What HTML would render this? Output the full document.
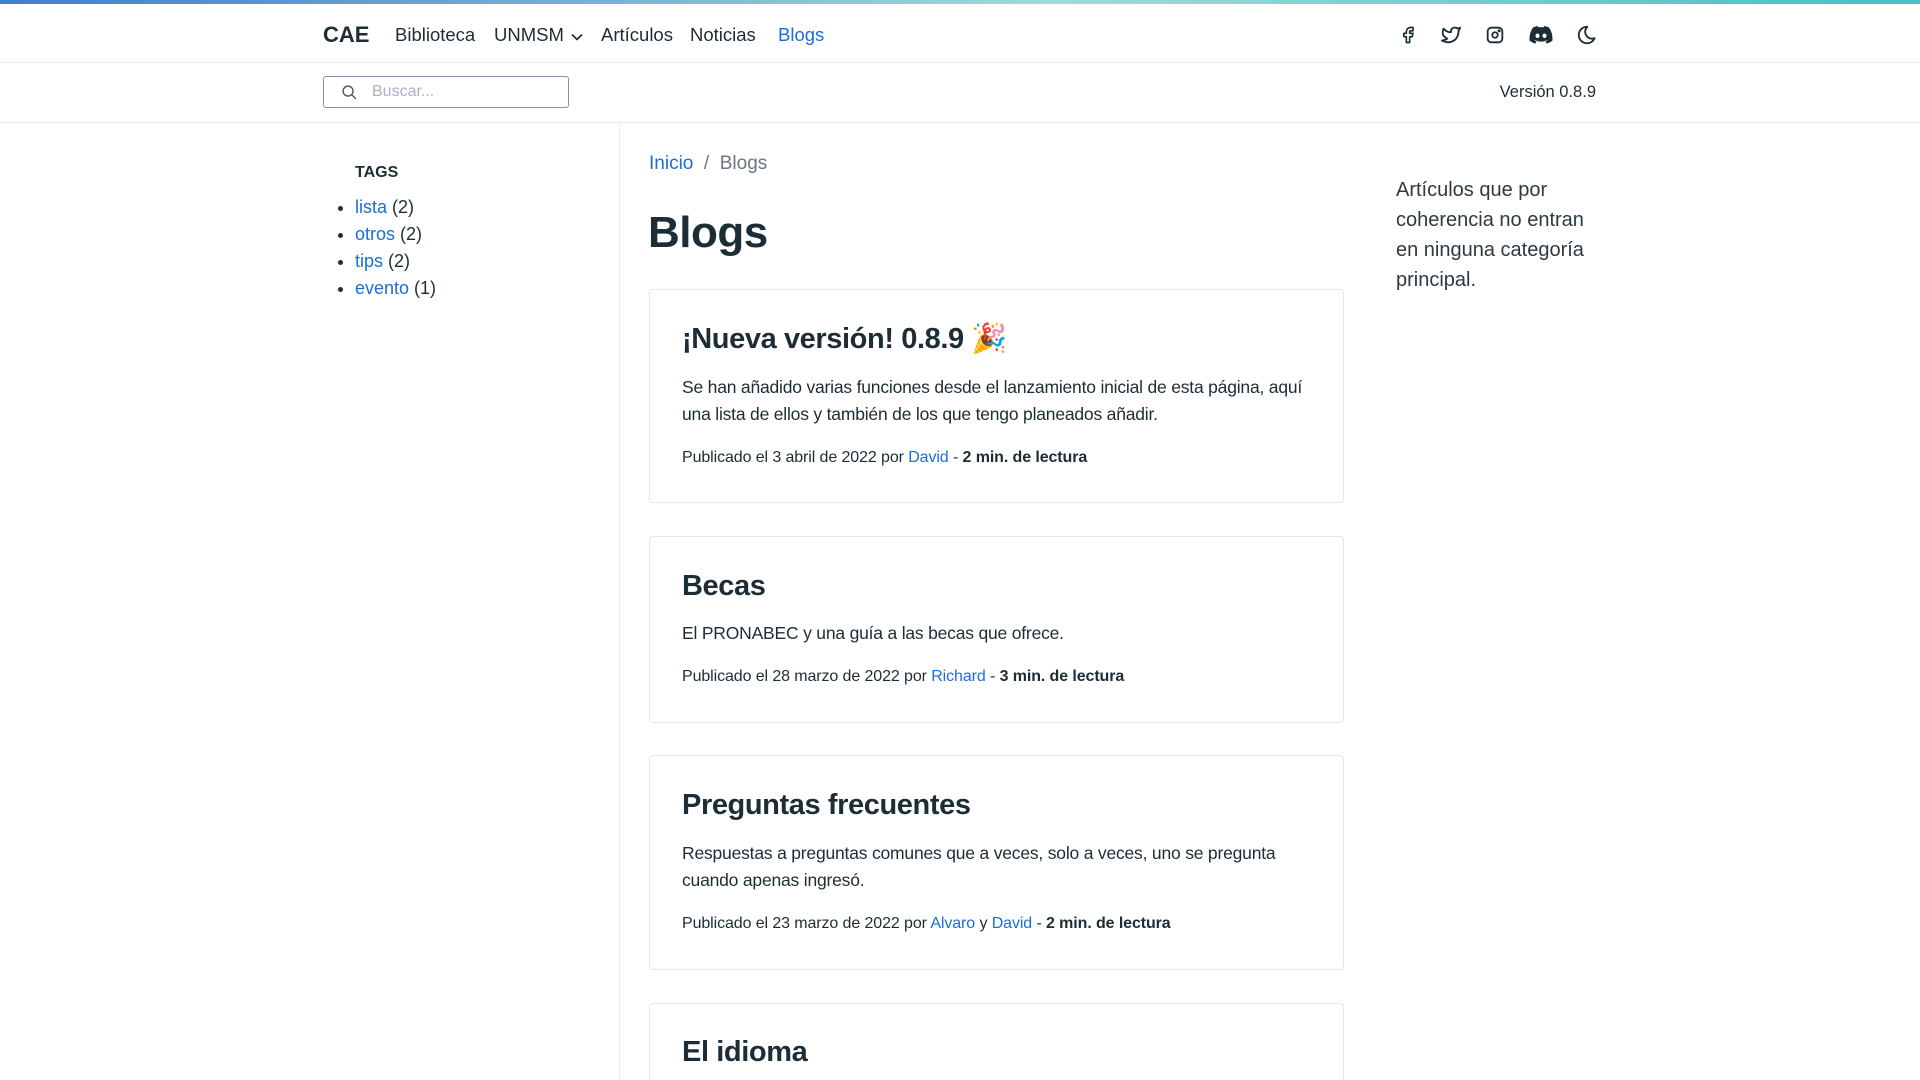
<!DOCTYPE html>
<html><head><meta charset="utf-8"><style>
*{box-sizing:border-box;margin:0;padding:0}
html,body{width:1920px;height:1080px;overflow:hidden}
body{background:#fff;font-family:"Liberation Sans",sans-serif;color:#1d2d35;position:relative}
a{color:#1a6ddb;text-decoration:none}
.bar{position:absolute;top:0;left:0;width:1920px;height:4px;background:linear-gradient(90deg,#3f7fd0,#9ddcd6 55%,#45bfc9)}
.abs{position:absolute;white-space:nowrap}
.hl{position:absolute;left:0;width:1920px;height:1px;background:#e9ecef}
.nav{font-size:18.5px;top:24px}
.card{position:absolute;left:649px;width:695px;border:1px solid #e3e6ea;border-radius:4px}
.t{font-size:29px;font-weight:bold;letter-spacing:-0.4px}
.d{font-size:17.5px;line-height:27px;letter-spacing:-0.2px}
.m{font-size:16px;letter-spacing:-0.1px}
</style></head><body>
<div class="bar"></div>
<div class="abs" style="left:323px;top:22px;font-size:22px;font-weight:bold">CAE</div>
<div class="abs nav" style="left:395px">Biblioteca</div>
<div class="abs nav" style="left:494px">UNMSM <svg width="12" height="8" viewBox="0 0 12 8" style="margin-left:2px"><path d="M1 1.5l5 5 5-5" fill="none" stroke="#1d2d35" stroke-width="1.6"/></svg></div>
<div class="abs nav" style="left:601px">Artículos</div>
<div class="abs nav" style="left:690px">Noticias</div>
<div class="abs nav" style="left:778px;color:#1a6ddb">Blogs</div>
<svg class="abs" style="left:1398px;top:24px" width="20" height="22" viewBox="0 0 24 24" fill="none" stroke="#1d2d35" stroke-width="2" stroke-linejoin="round"><path d="M7 10v4h3v7h4v-7h3l1-4h-4V8a1 1 0 0 1 1-1h3V3h-3a5 5 0 0 0-5 5v2H7z"/></svg>
<svg class="abs" style="left:1440px;top:24px" width="22" height="22" viewBox="0 0 24 24" fill="none" stroke="#1d2d35" stroke-width="2" stroke-linejoin="round"><path d="M22 4.01c-1 .49-1.98.689-3 .99-1.121-1.265-2.783-1.335-4.38-.737S11.977 6.323 12 8v1c-3.245.083-6.135-1.395-8-4 0 0-4.182 7.433 4 11-1.872 1.247-3.739 2.088-6 2 3.308 1.803 6.913 2.423 10.034 1.517 3.58-1.04 6.522-3.723 7.651-7.742a13.840 13.840 0 0 0 .497-3.753C20.18 7.773 21.692 5.25 22 4.009z"/></svg>
<svg class="abs" style="left:1484px;top:24px" width="22" height="22" viewBox="0 0 24 24" fill="none" stroke="#1d2d35" stroke-width="2"><rect x="4" y="4" width="16" height="16" rx="4"/><circle cx="12" cy="12" r="3"/><circle cx="16.5" cy="7.5" r=".6" fill="#1d2d35"/></svg>
<svg class="abs" style="left:1529px;top:25px" width="24" height="20" viewBox="0 0 24 20"><path d="M20 2.5A19 19 0 0 0 15.3 1l-.6 1.3a17 17 0 0 0-5.4 0L8.7 1A19 19 0 0 0 4 2.5C1 7 .2 11.4.6 15.7A19 19 0 0 0 6.4 18.6l1.2-2a12 12 0 0 1-1.9-.9l.5-.4a13.5 13.5 0 0 0 11.6 0l.5.4-1.9.9 1.2 2a19 19 0 0 0 5.8-2.9c.5-5-.8-9.4-3.4-13.2zM8.5 13.1c-1.1 0-2-1-2-2.3s.9-2.300 2-2.3 2 1 2 2.3-.9 2.3-2 2.3zm7 0c-1.1 0-2-1-2-2.3s.9-2.3 2-2.3 2 1 2 2.3-.9 2.3-2 2.3z" fill="#1d2d35"/></svg>
<svg class="abs" style="left:1576px;top:24px" width="22" height="22" viewBox="0 0 24 24" fill="none" stroke="#1d2d35" stroke-width="2" stroke-linejoin="round"><path d="M12 3c.132 0 .263 0 .393 0a7.5 7.5 0 0 0 7.92 12.446A9 9 0 1 1 12 2.992z"/></svg>
<div class="hl" style="top:62px"></div>
<div class="abs" style="left:323px;top:76px;width:246px;height:32px;border:1px solid #8f8cb3;border-radius:3px"></div>
<svg class="abs" style="left:341px;top:84px" width="17" height="17" viewBox="0 0 24 24" fill="none" stroke="#555" stroke-width="2"><circle cx="10" cy="10" r="7"/><path d="M21 21l-6-6"/></svg>
<div class="abs" style="left:372px;top:83px;font-size:16px;color:#b0adc6">Buscar...</div>
<div class="abs" style="right:324px;top:83px;font-size:16.5px">Versión 0.8.9</div>
<div class="hl" style="top:122px"></div>
<div style="position:absolute;left:619px;top:122px;width:1px;height:958px;background:#e9ecef"></div>
<div class="abs" style="left:355px;top:164px;font-size:16px;font-weight:bold">TAGS</div>
<ul style="position:absolute;left:355px;top:194px;font-size:18px;line-height:27px;list-style:disc">
<li><a href="#">lista</a> (2)</li><li><a href="#">otros</a> (2)</li><li><a href="#">tips</a> (2)</li><li><a href="#">evento</a> (1)</li></ul>
<div class="abs" style="left:649px;top:153px;font-size:19px;color:#6c757d"><a href="#">Inicio</a>&nbsp;&nbsp;/&nbsp;&nbsp;Blogs</div>
<div class="abs" style="left:648px;top:208px;font-size:44px;font-weight:bold;letter-spacing:-0.5px">Blogs</div>
<div class="card" style="top:289px;height:214px"></div>
<div class="abs t" style="left:682px;top:322px">¡Nueva versión! 0.8.9 🎉</div>
<div class="abs d" style="left:682px;top:374px">Se han añadido varias funciones desde el lanzamiento inicial de esta página, aquí<br>una lista de ellos y también de los que tengo planeados añadir.</div>
<div class="abs m" style="left:682px;top:449px">Publicado el 3 abril de 2022 por <a href="#">David</a> - <b>2 min. de lectura</b></div>
<div class="card" style="top:536px;height:187px"></div>
<div class="abs t" style="left:682px;top:570px">Becas</div>
<div class="abs d" style="left:682px;top:620px">El PRONABEC y una guía a las becas que ofrece.</div>
<div class="abs m" style="left:682px;top:668px">Publicado el 28 marzo de 2022 por <a href="#">Richard</a> - <b>3 min. de lectura</b></div>
<div class="card" style="top:755px;height:215px"></div>
<div class="abs t" style="left:682px;top:789px">Preguntas frecuentes</div>
<div class="abs d" style="left:682px;top:840px">Respuestas a preguntas comunes que a veces, solo a veces, uno se pregunta<br>cuando apenas ingresó.</div>
<div class="abs m" style="left:682px;top:915px">Publicado el 23 marzo de 2022 por <a href="#">Alvaro</a> y <a href="#">David</a> - <b>2 min. de lectura</b></div>
<div class="card" style="top:1003px;height:90px;border-bottom:none;border-radius:4px 4px 0 0"></div>
<div class="abs t" style="left:682px;top:1036px">El idioma</div>
<div class="abs" style="left:1396px;top:175px;font-size:20px;line-height:30px;color:#2d3a42">Artículos que por<br>coherencia no entran<br>en ninguna categoría<br>principal.</div>
</body></html>
